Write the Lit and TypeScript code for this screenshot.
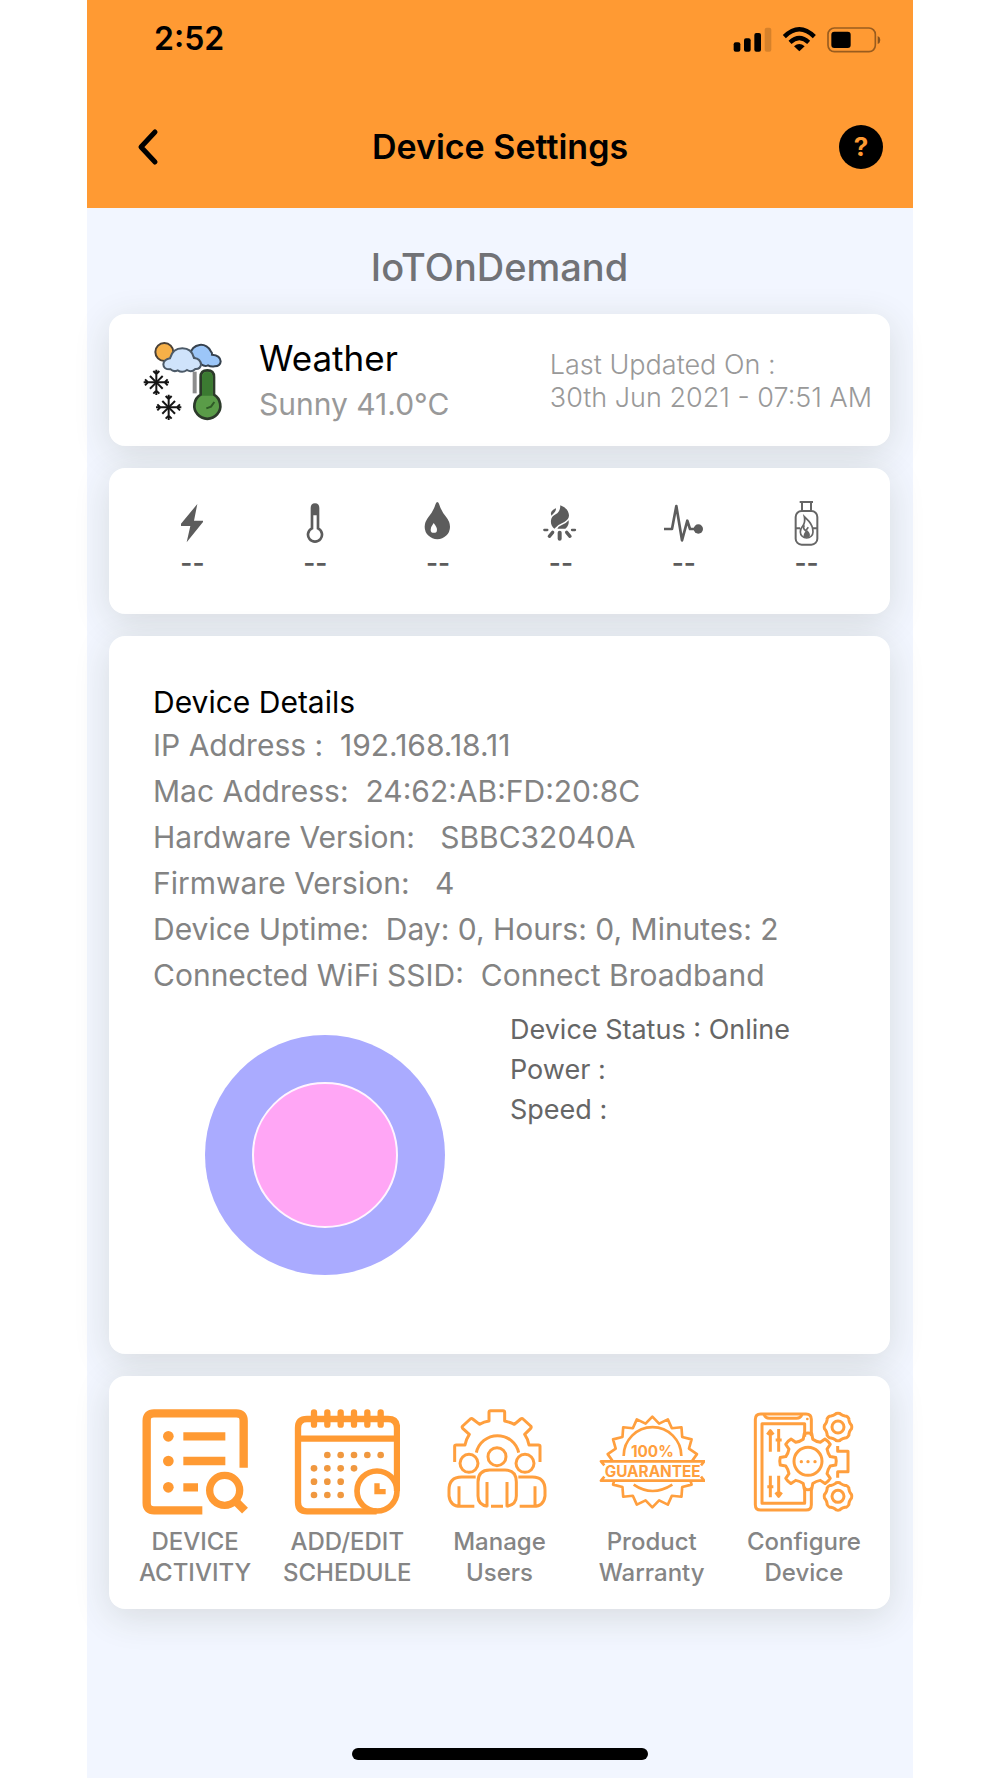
import { LitElement, html, css, svg } from "lit";
import { customElement, property } from "lit/decorators.js";

/** Rounded cog outline with n teeth around a centre point. */
function cog(cx: number, cy: number, outer: number, root: number, n: number): string {
  const step = (Math.PI * 2) / n;
  const at = (r: number, a: number) =>
    `${(cx + r * Math.cos(a)).toFixed(1)} ${(cy + r * Math.sin(a)).toFixed(1)}`;
  let d = "";
  for (let i = 0; i < n; i++) {
    const a = i * step - Math.PI / 2;
    d += `${i ? "L" : "M"}${at(root, a - step * 0.27)} L${at(outer, a - step * 0.17)} `;
    d += `Q${at(outer * 1.03, a)} ${at(outer, a + step * 0.17)} L${at(root, a + step * 0.27)} `;
    d += `Q${at(root * 0.94, a + step * 0.5)} ${at(root, a + step * 0.73)} `;
  }
  return d + "Z";
}

/** Zigzag seal edge. */
function seal(cx: number, cy: number, outer: number, inner: number, n: number): string {
  const pts: string[] = [];
  for (let i = 0; i < n * 2; i++) {
    const r = i % 2 ? inner : outer;
    const a = (i * Math.PI) / n - Math.PI / 2;
    pts.push(`${(cx + r * Math.cos(a)).toFixed(1)} ${(cy + r * Math.sin(a)).toFixed(1)}`);
  }
  return "M" + pts.join("L") + "Z";
}

const flake = (x: number, y: number) => svg`
  <g transform="translate(${x} ${y})" fill="none" stroke="#151515" stroke-width="6">
    ${[0, 45, 90, 135, 180, 225, 270, 315].map((a) =>
      a % 90
        ? svg`<path transform="rotate(${a})" d="M0 0V-27" />`
        : svg`<path transform="rotate(${a})" d="M0 0V-38M-9 -34L0 -25L9 -34" />`
    )}
  </g>`;

const icons: Record<string, { box: string; art: unknown }> = {
  weather: {
    box: "132 120 240 240",
    art: svg`
      <path d="M287 212V277" stroke="#8d8d8d" stroke-width="12" />
      <path d="M274 160a32 31 0 0 1 62-8q4 3 3 9q25 2 26 20q-1 14-18 15q-12 2-20-3q-10 5-20-3z" fill="#9cc6f8" stroke="#36424f" stroke-width="6" />
      <circle cx="196" cy="153" r="27" fill="#f6b048" stroke="#4a4137" stroke-width="6" />
      <path d="M213 172q8-30 37-30q28 0 35 29q20 2 21 20q-2 14-17 13q-12 12-25 3q-14 10-28 1q-12 6-21-3q-22 1-22-15q1-14 20-18z" fill="#cfe3fb" stroke="#4c5a68" stroke-width="6" />
      <path d="M305 281V228q0-20 20-20t20 20v53a39 39 0 1 1-40 0z" fill="#5a9c48" stroke="#2c3a2a" stroke-width="8" />
      <path d="M309 284V230q0-17 16-17t16 17v54z" fill="#3b7a31" />
      <path d="M322 322l14-5 10-14" fill="none" stroke="#2f5a27" stroke-width="6" />
      ${flake(172, 244)} ${flake(209, 319)}`,
  },
  bolt: {
    box: "28 60 138 138",
    art: svg`<path d="M113 72L64 131V138H92L81 187L130 126V122H103Z" fill="#5c5c5c" />`,
  },
  thermometer: {
    box: "397 60 138 138",
    art: svg`
      <path d="M457 145V84q0-10 9-10t9 10v61a21 21 0 1 1-18 0z" fill="#fff" stroke="#5c5c5c" stroke-width="8" />
      <path d="M457 106V84q0-8 9-8t9 8v22z" fill="#5c5c5c" />`,
  },
  drop: {
    box: "765 60 138 138",
    art: svg`
      <path d="M832 66q4 0 6 8q6 20 20 36q12 15 12 30a38 38 0 0 1-76 0q0-15 12-30q14-16 20-36q2-8 6-8z" fill="#5c5c5c" />
      <path d="M821 129q10 12 10 20a9 9 0 0 1-19 0q0-8 9-20z" fill="#fff" />`,
  },
  fire: {
    box: "114 60 138 138",
    art: svg`
      <g fill="#5c5c5c">
        <path d="M181 76q24 8 26 30q0 12-14 20q-16 6-30 20q-12-10-10-25q1-12 14-18q14-8 14-27z" />
        <path d="M206 121q2 16-10 25h-24q2-6 12-10q14-5 22-15z" />
        <path d="M168 85q1 10-14 22q-6-14 14-22z" />
      </g>
      <g fill="none" stroke="#5c5c5c" stroke-linecap="round">
        <path d="M133 150h9M225 150h-9" stroke-width="7" />
        <path d="M158 157l-10 12M200 157l10 12" stroke-width="10" />
        <path d="M179 158v18" stroke-width="12" />
      </g>`,
  },
  pulse: {
    box: "482 60 138 138",
    art: svg`
      <path d="M491 147H515L528 78L545 181L561 122L569 147H590" fill="none" stroke="#5c5c5c" stroke-width="8" stroke-linejoin="round" />
      <circle cx="594" cy="147" r="14" fill="#5c5c5c" />`,
  },
  gas: {
    box: "851 60 138 138",
    art: svg`
      <g fill="none" stroke="#666" stroke-width="6">
        <path d="M898 66H938M905 67V92M932 67V92" />
        <rect x="886" y="93" width="65" height="101" rx="18" />
        <path d="M887 145H899M938 145H950" />
        <path d="M912 110q8 8 14 14q12 14 12 32a19 18 0 0 1-38 0q0-10 6-16q10-12 6-30z" stroke-width="5" />
        <path d="M912 136q-6 10 4 16l8-10" stroke-width="5" />
      </g>
      <path d="M920 150q14 12 6 23h-16q-3-12 10-23z" fill="#666" />`,
  },
  activity: {
    box: "36 57 318 318",
    art: svg`
      <g fill="none" stroke="#ff9a33">
        <path d="M341 233V92q0-22-22-22H72q-22 0-22 22V339q0 22 22 22H217" stroke-width="25" />
        <circle cx="284" cy="301" r="45" stroke-width="22" />
        <path d="M315 332L345 362" stroke-width="25" />
        <path d="M160 139H286M160 213H286M160 292H204" stroke-width="25" />
      </g>
      <g fill="#ff9a33">
        <circle cx="115" cy="139" r="16" /><circle cx="115" cy="213" r="16" /><circle cx="115" cy="292" r="16" />
      </g>`,
  },
  schedule: {
    box: "493 57 318 318",
    art: svg`
      <g fill="none" stroke="#ff9a33" stroke-width="19">
        <path d="M741 364H532q-27 0-27-27V114q0-27 27-27H775q27 0 27 27V303M505 146H802" />
        <path d="M553 67V104M593 67V104M633 67V104M673 67V104M713 67V104M753 67V104" stroke-linecap="round" />
        <circle cx="742" cy="303" r="60" stroke-width="17" />
        <path d="M742 280V305H768" stroke-width="16" />
      </g>
      <g fill="#f0983f">
        ${[593, 633, 673, 713, 753].map((x) => svg`<circle cx=${x} cy="195" r="10" />`)}
        ${[553, 593, 633, 673].map((x) => svg`<circle cx=${x} cy="235" r="10" />`)}
        ${[553, 593, 633].map((x) => svg`<circle cx=${x} cy="275" r="10" /><circle cx=${x} cy="315" r="10" />`)}
      </g>`,
  },
  users: {
    box: "49 57 318 318",
    art: svg`
      <g fill="none" stroke="#ff9f3e" stroke-width="9" stroke-linejoin="round">
        <path d="M75 216V169q0-4 5-4H106Q110 146 119 133L99 115q-3-4 0-7L122 87q4-3 7 0L150 103Q163 95 178 93V67q0-5 5-5H220q5 0 5 5V93Q243 97 254 103L273 87q4-3 7 0L303 108q3 4 0 7L285 133Q295 147 298 165H326q5 0 5 4V216" />
        <path d="M140 188A65 65 0 0 1 267 188" />
        <circle cx="118" cy="220" r="27" /><circle cx="202" cy="200" r="27" /><circle cx="286" cy="220" r="27" />
        <path d="M138 261H96Q58 261 58 300V318Q62 349 92 349H134M88 289V349" />
        <path d="M174 349Q145 345 145 318V276Q145 240 180 240H226Q260 240 260 276V318Q260 345 230 349M172 276V350M232 276V350M184 349H220" />
        <path d="M266 261H308Q346 261 346 300V318Q342 349 312 349H270M316 289V349" />
      </g>`,
  },
  warranty: {
    box: "506 57 318 318",
    art: svg`
      <clipPath id="seal-halves"><rect x="500" y="50" width="330" height="164" /><rect x="500" y="272" width="330" height="100" /></clipPath>
      <g fill="none" stroke="#ff9f3e" stroke-width="8" stroke-linejoin="round">
        <path d=${seal(666, 216, 136, 117, 18)} clip-path="url(#seal-halves)" />
        <path d="M580 198A86 86 0 0 1 753 198M610 284Q666 322 726 284" />
        <path d="M522 226L512 214H822L812 226M522 260L512 272H822L812 260" />
      </g>
      <g fill="#ff9f3e" text-anchor="middle" font-family="Inter, sans-serif" font-weight="700">
        <text x="666" y="200" font-size="46">100%</text>
        <text x="667" y="260" font-size="46">GUARANTEE</text>
      </g>`,
  },
  configure: {
    box: "93 57 318 318",
    art: svg`
      <g fill="none" stroke="#ff9f3e" stroke-width="9" stroke-linejoin="round">
        <path d="M274 138V88q0-16-16-16H122q-16 0-16 16V344q0 16 16 16H258q16 0 16-16V292" />
        <path d="M132 73q4 12 16 12H230q12 0 16-12" />
        <path d="M254 140V101H126V340H254V290" />
        <path d=${cog(264, 214, 84, 68, 8)} />
        <circle cx="264" cy="214" r="42" />
        <path d=${cog(354, 111, 41, 39, 8)} /><circle cx="354" cy="111" r="18" />
        <path d=${cog(354, 319, 41, 39, 8)} /><circle cx="354" cy="319" r="18" />
        <path d="M353 168V184H384V245H353V263" />
        <path d="M151 185V120M142 134L151 122L160 134M176 117V185M167 150H185M151 257V322M142 290H160M176 257V320M167 307L176 319L185 307" />
      </g>
      <g fill="#ff9f3e">
        <circle cx="244" cy="215" r="5" /><circle cx="264" cy="215" r="5" /><circle cx="285" cy="215" r="5" /><circle cx="262" cy="87" r="4" />
      </g>`,
  },
};

@customElement("app-icon")
export class AppIcon extends LitElement {
  @property() name = "bolt";

  static styles = css`
    :host { display: block; flex: none; }
    svg { display: block; width: 100%; height: 100%; }
  `;

  render() {
    const icon = icons[this.name];
    return html`<svg viewBox=${icon.box} aria-hidden="true">${icon.art}</svg>`;
  }
}

@customElement("app-root")
export class AppRoot extends LitElement {
  static styles = css`
    :host { display: block; background: #fff; font-family: Inter, "Liberation Sans", sans-serif; color: #000; }
    * { box-sizing: border-box; }
    h1, h2, h3, p, dl, dd, dt, ul { margin: 0; padding: 0; font-weight: 400; }
    button { border: 0; padding: 0; background: none; color: inherit; font: inherit; cursor: pointer; }
    svg { display: block; }

    .screen { display: flex; flex-direction: column; max-width: 826px; min-height: 100vh; margin: 0 auto; background: #f2f6ff; }

    .top { background: #ff9a33; }
    .status { display: flex; justify-content: space-between; align-items: center; height: 78px; padding: 0 32px 0 67px; }
    .time { font-size: 32px; font-weight: 600; line-height: 40px; }
    .nav { display: grid; grid-template-columns: 64px 1fr 64px; align-items: center; height: 130px; padding: 8px 30px 0; }
    .title { font-size: 34px; font-weight: 600; line-height: 44px; text-align: center; }
    .back { justify-self: start; padding: 8px 20px; }
    .help { display: grid; place-items: center; justify-self: end; width: 44px; height: 44px; border-radius: 50%; background: #000; color: #ff9a33; font-size: 26px; font-weight: 700; line-height: 44px; }

    .content { display: flex; flex-direction: column; gap: 22px; padding: 34px 23px 0 22px; }
    .name { font-size: 38px; font-weight: 500; line-height: 50px; text-align: center; color: #717276; }
    .card { background: #fff; border-radius: 16px; box-shadow: 0 8px 36px rgba(60, 66, 30, 0.14); }

    .weather { display: flex; align-items: center; gap: 36px; min-height: 132px; padding: 2px 18px 0 34px; }
    .weather-icon { width: 80px; height: 80px; }
    .weather-text { flex: 1; }
    .weather-title { font-size: 35px; line-height: 46px; }
    .weather-now { font-size: 30px; line-height: 46px; color: #999; }
    .updated { font-size: 27px; font-weight: 300; line-height: 33px; color: #999; white-space: nowrap; }

    .metrics { display: grid; grid-template-columns: repeat(6, 1fr); padding: 32px 22px 34px; list-style: none; }
    .metric { display: flex; flex-direction: column; align-items: center; font-size: 26px; font-weight: 600; line-height: 34px; color: #5c5c5c; }
    .metric-icon { width: 46px; height: 46px; }

    .details { min-height: 718px; padding: 46px 44px 76px; }
    .details-title { font-size: 30px; line-height: 40px; }
    .row { display: flex; font-size: 30px; line-height: 46px; color: #838383; white-space: pre; }
    .live { display: grid; grid-template-columns: 357px 1fr; padding-top: 12px; }
    .chart { width: 242px; height: 242px; margin: 24px 0 0 51px; }
    .state { font-size: 27px; font-weight: 500; line-height: 40px; color: #666; }

    .actions { display: grid; grid-template-columns: repeat(5, 1fr); min-height: 233px; padding: 33px 10px 20px; }
    .action { display: flex; flex-direction: column; align-items: center; gap: 11px; font-size: 24px; font-weight: 500; line-height: 31px; color: #858585; }
    .action-icon { width: 106px; height: 106px; }
    .action-label { white-space: pre-line; }

    .home { width: 296px; height: 12px; border-radius: 6px; background: #000; margin: auto auto 18px; }
  `;

  private metrics = [
    ["bolt", "Voltage"], ["thermometer", "Temperature"], ["drop", "Humidity"],
    ["fire", "Fire"], ["pulse", "Vibration"], ["gas", "Gas"],
  ];

  private rows = [
    ["IP Address : ", " 192.168.18.11"],
    ["Mac Address: ", " 24:62:AB:FD:20:8C"],
    ["Hardware Version: ", "  SBBC32040A"],
    ["Firmware Version: ", "  4"],
    ["Device Uptime: ", " Day: 0, Hours: 0, Minutes: 2"],
    ["Connected WiFi SSID: ", " Connect Broadband"],
  ];

  private actions = [
    ["activity", "DEVICE\nACTIVITY"], ["schedule", "ADD/EDIT\nSCHEDULE"], ["users", "Manage\nUsers"],
    ["warranty", "Product\nWarranty"], ["configure", "Configure\nDevice"],
  ];

  render() {
    return html`
      <div class="screen">
        <header class="top">
          <div class="status">
            <span class="time">2:52</span>
            <svg width="148" height="27" viewBox="98 45 444 81" aria-hidden="true">
              <rect x="100" y="94" width="20" height="28" rx="6" />
              <rect x="131" y="82" width="20" height="40" rx="6" />
              <rect x="162" y="66" width="20" height="56" rx="6" />
              <rect x="193" y="50" width="20" height="72" rx="6" fill="#000" opacity="0.16" />
              <g fill="none" stroke="#000" stroke-width="13">
                <path d="M252 77Q297 33 342 77" />
                <path d="M269 94Q297 68 325 94" />
              </g>
              <path d="M297 121L281 106Q297 92 313 106Z" />
              <rect x="383" y="51" width="142" height="71" rx="19" fill="none" stroke="#000" stroke-opacity="0.4" stroke-width="5" />
              <rect x="393" y="62" width="58" height="49" rx="9" />
              <path d="M532 75q8 3 8 12t-8 12z" opacity="0.45" />
            </svg>
          </div>
          <div class="nav">
            <button class="back" aria-label="Back">
              <svg width="22" height="38" viewBox="0 0 22 38"><path d="M18 4L4 19L18 34" fill="none" stroke="#000" stroke-width="5" stroke-linecap="round" stroke-linejoin="round" /></svg>
            </button>
            <h1 class="title">Device Settings</h1>
            <button class="help" aria-label="Help">?</button>
          </div>
        </header>

        <main class="content">
          <h2 class="name">IoTOnDemand</h2>

          <section class="card weather">
            <app-icon class="weather-icon" name="weather"></app-icon>
            <div class="weather-text">
              <h3 class="weather-title">Weather</h3>
              <p class="weather-now">Sunny 41.0°C</p>
            </div>
            <p class="updated">Last Updated On :<br />30th Jun 2021 - 07:51 AM</p>
          </section>

          <ul class="card metrics">
            ${this.metrics.map(
              ([icon, label]) => html`<li class="metric" aria-label=${label}>
                <app-icon class="metric-icon" name=${icon}></app-icon><span>--</span>
              </li>`
            )}
          </ul>

          <section class="card details">
            <h3 class="details-title">Device Details</h3>
            <dl>
              ${this.rows.map(([k, v]) => html`<div class="row"><dt>${k}</dt><dd>${v}</dd></div>`)}
            </dl>
            <div class="live">
              <svg class="chart" viewBox="0 0 242 242" aria-hidden="true">
                <circle cx="121" cy="121" r="120" fill="#aaabff" />
                <circle cx="121" cy="121" r="72" fill="#ffa6f5" stroke="#fff4ff" stroke-width="2" />
              </svg>
              <div class="state">
                <p>Device Status : Online</p>
                <p>Power :</p>
                <p>Speed :</p>
              </div>
            </div>
          </section>

          <nav class="card actions">
            ${this.actions.map(
              ([icon, label]) => html`<button class="action">
                <app-icon class="action-icon" name=${icon}></app-icon><span class="action-label">${label}</span>
              </button>`
            )}
          </nav>
        </main>
        <div class="home"></div>
      </div>
    `;
  }
}
